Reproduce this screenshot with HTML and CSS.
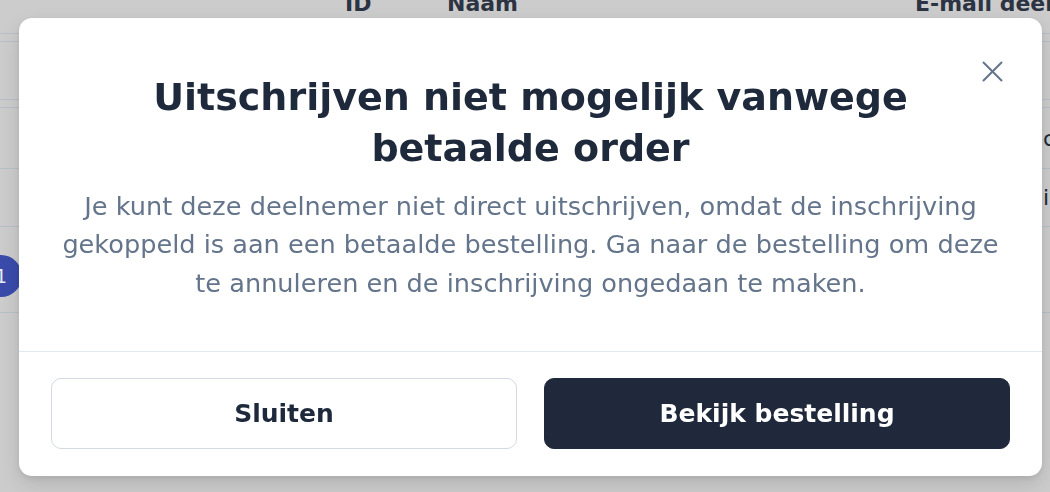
FILE: index.html
```html
<!DOCTYPE html>
<html lang="nl">
<head>
<meta charset="utf-8">
<title>Uitschrijven niet mogelijk</title>
<link rel="stylesheet" href="styles.css">
</head>
<body>
<div class="page">
  <div class="thead">
    <span class="col col-id">ID</span>
    <span class="col col-name">Naam</span>
    <span class="col col-mail">E-mail deelnemer</span>
  </div>
  <div class="row row-thin"></div>
  <div class="row row-a"></div>
  <div class="row row-thin"></div>
  <div class="row row-b"><span class="edge">c</span></div>
  <div class="row row-c"><span class="edge">i</span></div>
  <div class="row row-d"><span class="badge">1</span></div>
</div>

<div class="modal" role="dialog" aria-modal="true">
  <div class="modal-body">
    <button class="close" aria-label="Sluiten">
      <svg width="21" height="21" viewBox="0 0 21 21" fill="none" stroke="currentColor" stroke-width="2" stroke-linecap="round">
        <path d="M1.5 1.5 L19.5 19.5 M19.5 1.5 L1.5 19.5"/>
      </svg>
    </button>
    <h2 class="title">Uitschrijven niet mogelijk vanwege betaalde order</h2>
    <p class="text">Je kunt deze deelnemer niet direct uitschrijven, omdat de inschrijving gekoppeld is aan een betaalde bestelling. Ga naar de bestelling om deze te annuleren en de inschrijving ongedaan te maken.</p>
  </div>
  <div class="modal-footer">
    <button class="btn btn-secondary">Sluiten</button>
    <button class="btn btn-primary">Bekijk bestelling</button>
  </div>
</div>
</body>
</html>
```

FILE: styles.css
```css
* { box-sizing: border-box; }

html, body {
  margin: 0;
  padding: 0;
  width: 1050px;
  height: 492px;
  overflow: hidden;
  background: #cccccc;
  font-family: "DejaVu Sans", Verdana, sans-serif;
}

/* background table (under the overlay) */
.page {
  width: 1050px;
  overflow: hidden;
}

.thead {
  display: flex;
  height: 34px;
  border-bottom: 1px solid #b9bfc8;
  padding-left: 345px;
  overflow: hidden;
}

.col {
  display: block;
  flex: 0 0 auto;
  margin-top: -7px;
  font-weight: 700;
  font-size: 22px;
  line-height: 22px;
  color: #2c3443;
  white-space: nowrap;
}
.col-id { width: 102px; }
.col-name { width: 468px; }

.row {
  display: flex;
  align-items: center;
  border-bottom: 1px solid #b9bfc8;
}
.row-thin { height: 8px; }
.row-a { height: 58px; }
.row-b { height: 61px; }
.row-c { height: 58px; }
.row-d { height: 86px; }

.edge {
  padding-left: 1043px;
  font-size: 22px;
  color: #222a36;
  white-space: nowrap;
}

.badge {
  margin-left: -20px;
  margin-top: 12px;
  width: 42px;
  height: 42px;
  border-radius: 50%;
  background: #3a4bab;
  color: #e8ebf5;
  font-size: 19px;
  display: flex;
  align-items: center;
  justify-content: center;
}

/* modal */
.modal {
  position: fixed;
  left: 19px;
  top: 18px;
  width: 1023px;
  height: 458px;
  background: #ffffff;
  border-radius: 13px;
  box-shadow: 0 8px 20px rgba(0, 0, 0, 0.12), 0 2px 6px rgba(0, 0, 0, 0.08);
  display: flex;
  flex-direction: column;
  overflow: hidden;
}

.modal-body {
  position: relative;
  padding: 54px 40px 49px;
  text-align: center;
}

.close {
  position: absolute;
  top: 43px;
  right: 39px;
  width: 21px;
  height: 21px;
  padding: 0;
  margin: 0;
  border: 0;
  background: none;
  color: #64748b;
  display: block;
  cursor: pointer;
}
.close svg { display: block; }

.title {
  margin: 0;
  padding: 0 60px;
  font-weight: 700;
  font-size: 38px;
  line-height: 51px;
  color: #1e293b;
}

.text {
  margin: 12.8px 0 0;
  font-size: 25.6px;
  line-height: 38.4px;
  color: #64748b;
}

.modal-footer {
  border-top: 1px solid #e2e8f0;
  padding: 26px 32px 27px;
  display: flex;
  gap: 27px;
}

.btn {
  flex: 1 1 0;
  height: 71px;
  border-radius: 10px;
  font-family: "DejaVu Sans", Verdana, sans-serif;
  font-weight: 700;
  font-size: 25px;
  cursor: pointer;
}

.btn-secondary {
  background: #ffffff;
  border: 1px solid #d3dae3;
  color: #1e293b;
}

.btn-primary {
  background: #1f293b;
  border: 1px solid #1f293b;
  color: #ffffff;
}
```
